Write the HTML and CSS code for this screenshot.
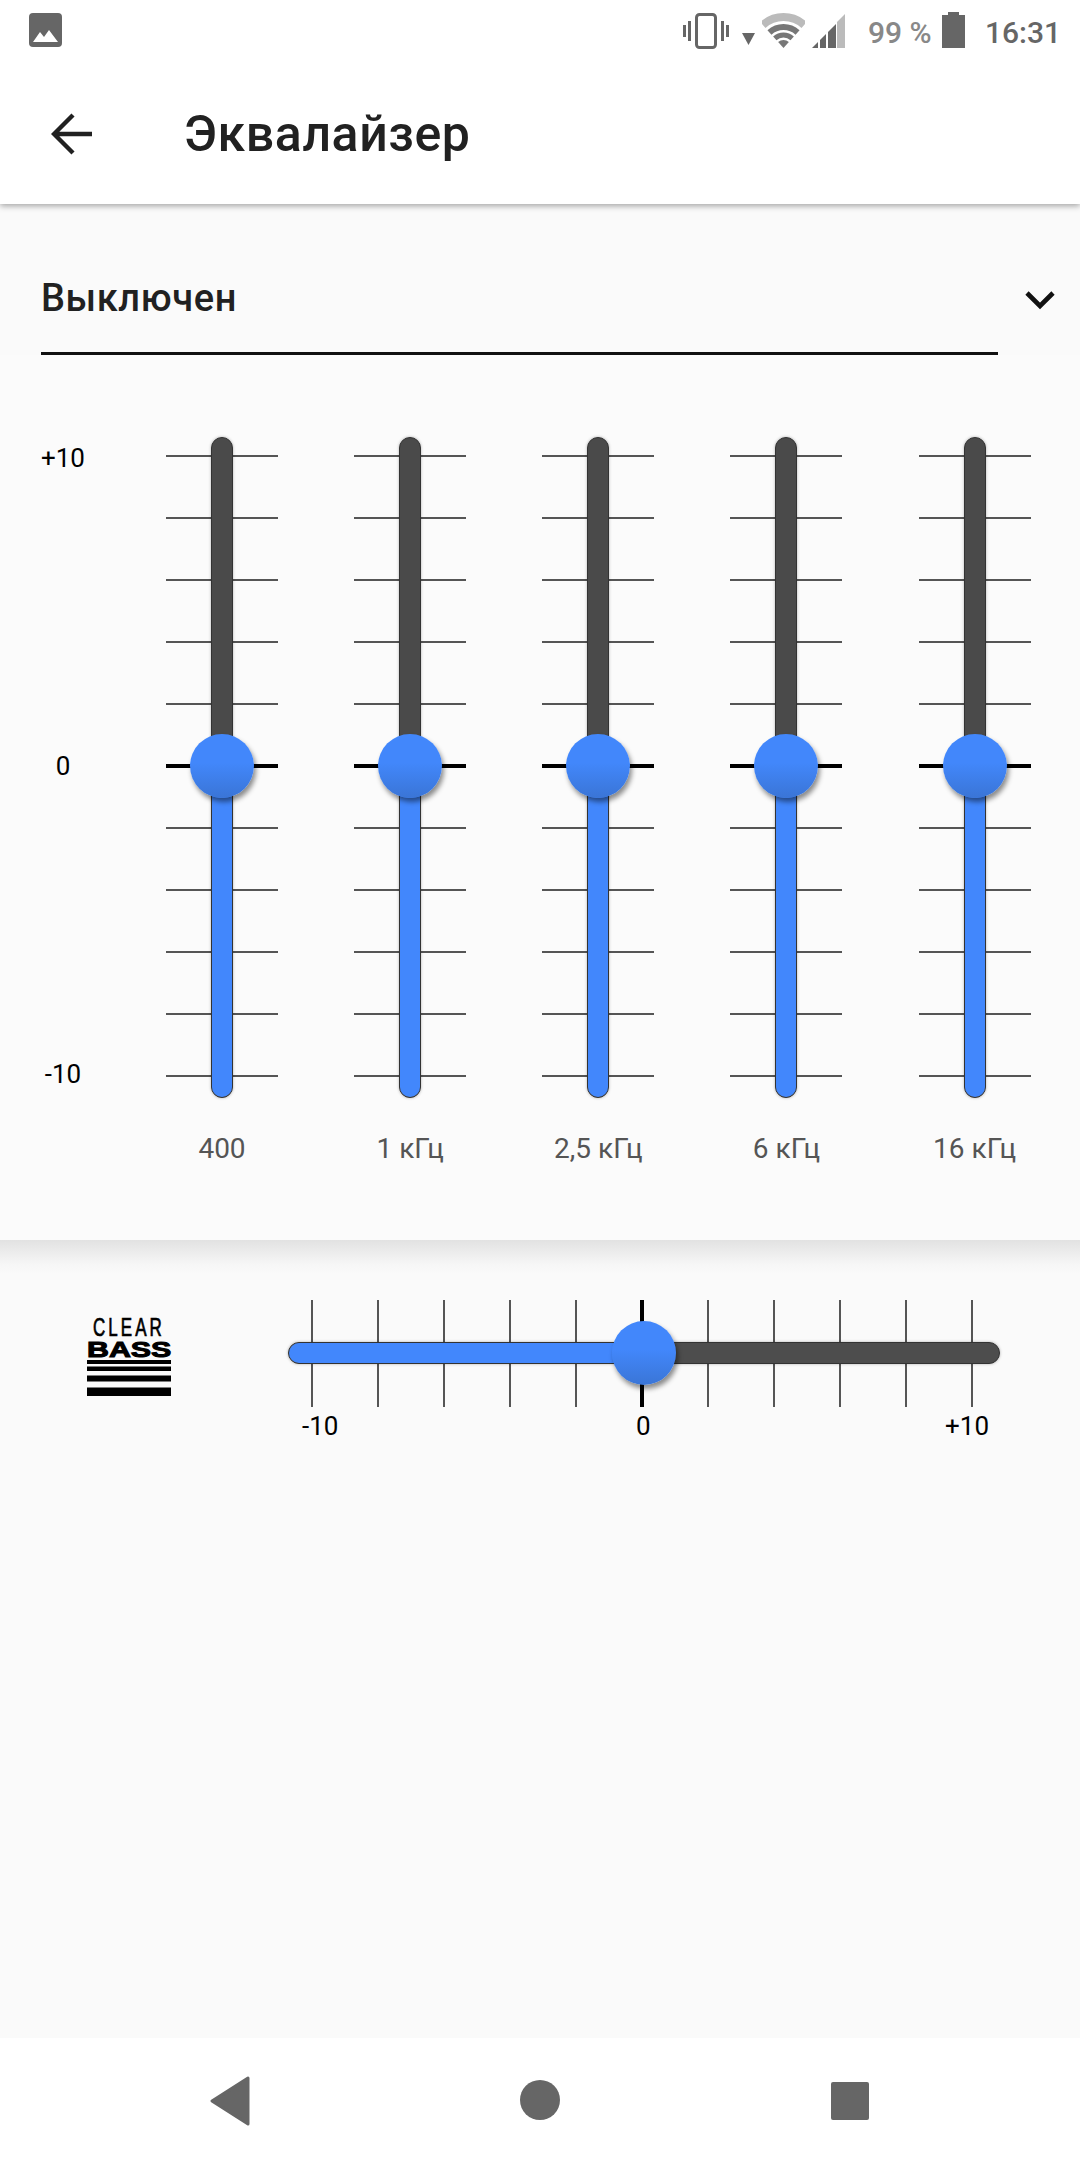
FILE: index.html
```html
<!DOCTYPE html>
<html lang="ru">
<head>
  <meta charset="UTF-8">
  <meta name="viewport" content="width=device-width, initial-scale=1.0">
  <title>Эквалайзер</title>
  <link rel="stylesheet" href="styles.css">
</head>
<body>
  <!-- Status bar -->
  <div class="status-bar">
    <svg class="status-photo" width="33" height="34" viewBox="0 0 33 34">
      <rect width="33" height="34" rx="4" fill="#666"/>
      <path d="M4 29 L11 19 L15 24 L20 17 L29 29 Z" fill="#fff"/>
    </svg>
    <div class="status-right">
      <svg class="status-vibrate" width="46" height="36" viewBox="0 0 46 36">
        <rect x="13.5" y="1.5" width="19" height="33" rx="3" fill="none" stroke="#666" stroke-width="3"/>
        <rect x="0" y="12" width="3" height="12" fill="#666"/>
        <rect x="5" y="8" width="3" height="20" fill="#666"/>
        <rect x="38" y="8" width="3" height="20" fill="#666"/>
        <rect x="43" y="12" width="3" height="12" fill="#666"/>
      </svg>
      <svg class="status-down" width="13" height="12" viewBox="0 0 13 12">
        <path d="M0 0 H13 L6.5 12 Z" fill="#666"/>
      </svg>
      <svg class="status-wifi" width="43" height="35" viewBox="0 0 43 35">
        <path d="M0.8 12 A31 31 0 0 1 42.2 12" fill="none" stroke="#bbb" stroke-width="8"/>
        <path d="M7.45 19.4 A21 21 0 0 1 35.55 19.4" fill="none" stroke="#777" stroke-width="6"/>
        <path d="M12.8 25.34 A13 13 0 0 1 30.2 25.34" fill="none" stroke="#777" stroke-width="5"/>
        <path d="M21.5 35 L16.15 29.05 A8 8 0 0 1 26.85 29.05 Z" fill="#777"/>
      </svg>
      <svg class="status-signal" width="34" height="34" viewBox="0 0 34 34">
        <path d="M1 34 L7 28 V34 Z" fill="#666"/>
        <path d="M9 34 V26 L15 20 V34 Z" fill="#666"/>
        <path d="M17 34 V18 L25 10 V34 Z" fill="#666"/>
        <path d="M26 34 V8 L34 0 V34 Z" fill="#bbb"/>
      </svg>
      <span class="status-battery-text">99 %</span>
      <svg class="status-battery" width="23" height="36" viewBox="0 0 23 36">
        <path d="M6 0 H17 V3 H23 V36 H0 V3 H6 Z" fill="#666"/>
      </svg>
      <span class="status-time">16:31</span>
    </div>
  </div>

  <!-- Toolbar -->
  <div class="toolbar">
    <svg class="back-arrow" width="42" height="42" viewBox="0 0 42 42">
      <path d="M41 21 H4 M22 2 L3 21 L22 40" fill="none" stroke="#212121" stroke-width="4.4"/>
    </svg>
    <div class="toolbar-title">Эквалайзер</div>
  </div>

  <!-- Preset dropdown -->
  <div class="preset-row">
    <div class="preset-field">Выключен</div>
    <svg class="preset-chevron" width="32" height="20" viewBox="0 0 32 20">
      <path d="M3 3 L16 16 L29 3" fill="none" stroke="#111" stroke-width="4.6"/>
    </svg>
  </div>

  <!-- Equalizer -->
  <div class="eq">
    <div class="eq-axis">
      <span>+10</span>
      <span>0</span>
      <span>-10</span>
    </div>
    <div class="eq-bands">
      <div class="band">
        <div class="ladder">
          <i></i><i></i><i></i><i></i><i></i><i class="zero"></i><i></i><i></i><i></i><i></i><i></i>
          <div class="track"><div class="track-fill"></div></div>
          <div class="thumb"></div>
        </div>
        <div class="band-label">400</div>
      </div>
      <div class="band">
        <div class="ladder">
          <i></i><i></i><i></i><i></i><i></i><i class="zero"></i><i></i><i></i><i></i><i></i><i></i>
          <div class="track"><div class="track-fill"></div></div>
          <div class="thumb"></div>
        </div>
        <div class="band-label">1 кГц</div>
      </div>
      <div class="band">
        <div class="ladder">
          <i></i><i></i><i></i><i></i><i></i><i class="zero"></i><i></i><i></i><i></i><i></i><i></i>
          <div class="track"><div class="track-fill"></div></div>
          <div class="thumb"></div>
        </div>
        <div class="band-label">2,5 кГц</div>
      </div>
      <div class="band">
        <div class="ladder">
          <i></i><i></i><i></i><i></i><i></i><i class="zero"></i><i></i><i></i><i></i><i></i><i></i>
          <div class="track"><div class="track-fill"></div></div>
          <div class="thumb"></div>
        </div>
        <div class="band-label">6 кГц</div>
      </div>
      <div class="band">
        <div class="ladder">
          <i></i><i></i><i></i><i></i><i></i><i class="zero"></i><i></i><i></i><i></i><i></i><i></i>
          <div class="track"><div class="track-fill"></div></div>
          <div class="thumb"></div>
        </div>
        <div class="band-label">16 кГц</div>
      </div>
    </div>
  </div>

  <!-- Clear Bass -->
  <div class="bass">
    <svg class="bass-logo" width="95" height="90" viewBox="-5 -7 95 90">
      <text class="logo-clear" transform="translate(6 19) scale(0.68 1)">CLEAR</text>
      <text class="logo-bass" transform="translate(0 40) scale(1.38 1)">BASS</text>
      <rect y="43" width="84" height="4"/>
      <rect y="49.5" width="84" height="4.5"/>
      <rect y="58.5" width="84" height="6"/>
      <rect y="70.5" width="84" height="8.5"/>
    </svg>
    <div class="bass-slider">
      <div class="rail">
        <i></i><i></i><i></i><i></i><i></i><i class="zero"></i><i></i><i></i><i></i><i></i><i></i>
        <div class="rail-track"><div class="rail-fill"></div></div>
        <div class="rail-thumb"></div>
      </div>
      <div class="rail-labels">
        <span>-10</span>
        <span class="rail-zero-label">0</span>
        <span>+10</span>
      </div>
    </div>
  </div>

  <!-- Navigation bar -->
  <div class="nav-bar">
    <svg width="40" height="50" viewBox="0 0 40 50">
      <path d="M38 2 V48 L2 25 Z" fill="#666" stroke="#666" stroke-width="3" stroke-linejoin="round"/>
    </svg>
    <svg class="nav-home" width="40" height="40" viewBox="0 0 40 40">
      <circle cx="20" cy="20" r="20" fill="#666"/>
    </svg>
    <svg width="38" height="38" viewBox="0 0 38 38">
      <rect width="38" height="38" rx="2" fill="#666"/>
    </svg>
  </div>
</body>
</html>
```

FILE: styles.css
```css
* {
  box-sizing: border-box;
}

body {
  display: flex;
  flex-direction: column;
  width: 1080px;
  height: 2160px;
  margin: 0;
  overflow: hidden;
  font-family: 'Roboto', sans-serif;
  background: #fafafa;
  color: #000;
}

/* Status Bar */
.status-bar {
  position: relative;
  z-index: 1;
  display: flex;
  justify-content: space-between;
  height: 64px;
  padding: 13px 19px 0 29px;
  background: #fff;
}
.status-right {
  display: flex;
  align-items: flex-start;
}
.status-down {
  margin: 20px 7px 0 13px;
}
.status-signal {
  margin: 1px 0 0 6px;
}
.status-battery-text {
  width: 64px;
  margin: 2px 10px 0 23px;
  font-size: 30px;
  font-weight: 500;
  line-height: 36px;
  color: #888;
  white-space: nowrap;
}
.status-battery {
  margin-top: -1px;
}
.status-time {
  margin: 2px 0 0 20px;
  font-size: 30px;
  font-weight: 500;
  line-height: 36px;
  color: #666;
}

/* Toolbar */
.toolbar {
  position: relative;
  display: flex;
  align-items: center;
  height: 140px;
  padding: 0 0 1px 51px;
  background: #fff;
  box-shadow: 0 2px 6px rgba(0, 0, 0, 0.35);
}
.toolbar-title {
  margin-left: 91px;
  font-size: 50px;
  font-weight: 500;
  letter-spacing: 0.6px;
  color: #212121;
}

/* Preset Dropdown */
.preset-row {
  display: flex;
  align-items: flex-start;
  padding-left: 41px;
}
.preset-field {
  width: 957px;
  height: 151px;
  padding-top: 72px;
  border-bottom: 3px solid #111;
  font-size: 38px;
  font-weight: 500;
  letter-spacing: 0.6px;
  line-height: 44px;
  color: #212121;
}
.preset-chevron {
  margin: 86px 0 0 26px;
}

/* Equalizer */
.eq {
  display: flex;
  height: 885px;
  padding-top: 88px;
  background: #fbfbfb;
}
.eq-axis {
  display: flex;
  flex-direction: column;
  justify-content: space-between;
  align-items: center;
  width: 126px;
  height: 646px;
  font-size: 26px;
  line-height: 30px;
}
.eq-bands {
  display: flex;
  gap: 76.15px;
  margin-left: 40px;
}
.band {
  display: flex;
  flex-direction: column;
  width: 112px;
}
.ladder {
  position: relative;
  display: flex;
  flex-direction: column;
  justify-content: space-between;
  height: 622px;
  margin-top: 12px;
}
.ladder i {
  display: block;
  height: 2px;
  background: #555;
}
.ladder i.zero {
  height: 4px;
  margin: -1px 0;
  background: #000;
}
.track {
  position: absolute;
  top: -18px;
  bottom: -21px;
  left: 45px;
  width: 22px;
  overflow: hidden;
  border: 1px solid #333;
  border-radius: 11px;
  background: #4a4a4a;
  box-shadow: 0 0 3px rgba(0, 0, 0, 0.3);
}
.track-fill {
  position: absolute;
  left: 0;
  right: 0;
  bottom: 0;
  height: 50%;
  background: #4287fc;
}
.thumb {
  position: absolute;
  top: 279px;
  left: 24px;
  width: 64px;
  height: 64px;
  border-radius: 50%;
  background: linear-gradient(#4287fb 45%, #3a75d6);
  box-shadow: 2px 4px 5px rgba(0, 0, 0, 0.45);
}
.band-label {
  margin: 56px -20px 0;
  font-size: 28px;
  line-height: 32px;
  text-align: center;
  color: #555;
  white-space: nowrap;
}

/* Clear Bass */
.bass {
  display: flex;
  align-items: flex-start;
  padding: 60px 0 0 82px;
  background: linear-gradient(#e2e2e2, #f6f6f6 24px, #fafafa 34px);
}
.bass-logo {
  margin-top: 10px;
}
.logo-clear {
  font-family: 'Liberation Sans', sans-serif;
  font-size: 25px;
  letter-spacing: 4.5px;
  stroke: #000;
  stroke-width: 0.7px;
}
.logo-bass {
  font-family: 'Liberation Sans', sans-serif;
  font-size: 22px;
  font-weight: 700;
  stroke: #000;
  stroke-width: 1px;
}
.bass-slider {
  width: 662px;
  margin-left: 134px;
}
.rail {
  position: relative;
  display: flex;
  justify-content: space-between;
  height: 107px;
}
.rail i {
  display: block;
  width: 2px;
  background: #555;
}
.rail i.zero {
  width: 4px;
  margin: 0 -1px;
  background: #000;
}
.rail-track {
  position: absolute;
  top: 42px;
  left: -23px;
  right: -27px;
  height: 22px;
  overflow: hidden;
  border: 1px solid #333;
  border-radius: 11px;
  background: #4d4d4d;
  box-shadow: 0 0 3px rgba(0, 0, 0, 0.3);
}
.rail-fill {
  width: 50%;
  height: 100%;
  background: #4287fc;
}
.rail-thumb {
  position: absolute;
  top: 21px;
  left: 301px;
  width: 64px;
  height: 64px;
  border-radius: 50%;
  background: linear-gradient(#4287fb 45%, #3a75d6);
  box-shadow: 2px 4px 5px rgba(0, 0, 0, 0.45);
}
.rail-labels {
  display: flex;
  justify-content: space-between;
  margin: 4px -16px 0 -9px;
  font-size: 26px;
  line-height: 30px;
}
.rail-zero-label {
  padding-left: 3px;
}

/* Navigation Bar */
.nav-bar {
  display: flex;
  justify-content: space-between;
  align-items: center;
  height: 122px;
  margin-top: auto;
  padding: 3px 211px 0 210px;
  background: #fff;
}
.nav-home {
  margin: -2px 0 0 -2px;
}
```
